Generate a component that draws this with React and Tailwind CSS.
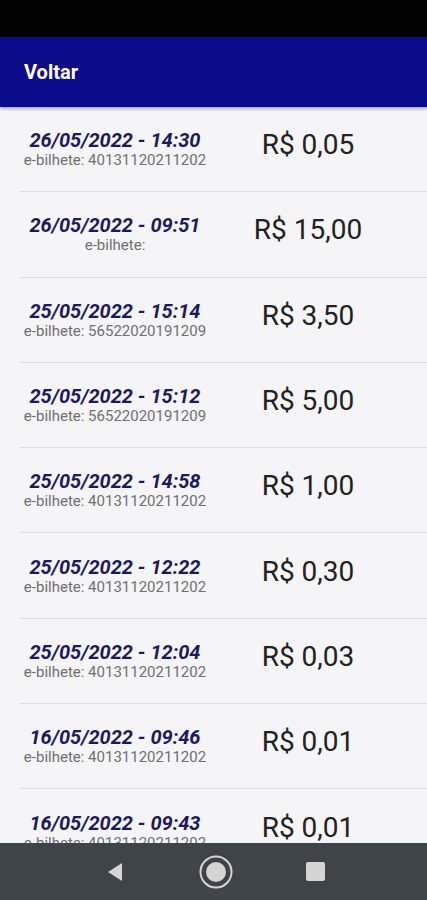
const rows = [
    { date: "26/05/2022 - 14:30", ticket: "40131120211202", amount: "R$ 0,05" },
    { date: "26/05/2022 - 09:51", ticket: "", amount: "R$ 15,00" },
    { date: "25/05/2022 - 15:14", ticket: "56522020191209", amount: "R$ 3,50" },
    { date: "25/05/2022 - 15:12", ticket: "56522020191209", amount: "R$ 5,00" },
    { date: "25/05/2022 - 14:58", ticket: "40131120211202", amount: "R$ 1,00" },
    { date: "25/05/2022 - 12:22", ticket: "40131120211202", amount: "R$ 0,30" },
    { date: "25/05/2022 - 12:04", ticket: "40131120211202", amount: "R$ 0,03" },
    { date: "16/05/2022 - 09:46", ticket: "40131120211202", amount: "R$ 0,01" },
    { date: "16/05/2022 - 09:43", ticket: "40131120211202", amount: "R$ 0,01" },
];

function Row({ row }) {
    return (
        <div className="ml-[20px] h-[85.3px] shrink-0 border-b border-[#dedee3] flex items-center">
            <div className="w-[230px] -ml-[20px] shrink-0 flex flex-col items-center">
                <span className="text-[20px] leading-[22px] font-bold italic text-[#1c1a5e]">{row.date}</span>
                <span className="text-[15px] leading-[18px] text-[#707070]">
                    e-bilhete: {row.ticket}
                </span>
            </div>
            <div className="w-[156px] shrink-0 -mt-[8px] text-center text-[28px] text-[#222222]">{row.amount}</div>
        </div>
    );
}

export default function App() {
    return (
        <div className="w-[427px] h-[900px] flex flex-col overflow-hidden bg-[#f5f5f8]" style={{ fontFamily: "Roboto, 'Liberation Sans', sans-serif" }}>
            <div className="h-[37px] shrink-0 bg-black"></div>
            <div className="h-[70px] shrink-0 bg-[#0c0b8c] flex items-center px-[24px] shadow-[0_2px_3px_rgba(0,0,0,0.3)] z-10">
                <span className="text-white font-bold text-[20px]">Voltar</span>
            </div>
            <div className="flex-1 flex flex-col overflow-hidden">
                {rows.map((row, i) => (
                    <Row key={i} row={row} />
                ))}
            </div>
            <div className="h-[57px] shrink-0 bg-[#3e4448] flex items-center justify-center">
                <svg width="22" height="22" viewBox="0 0 22 22" className="mr-[72px] ml-[2px]">
                    <polygon points="18,2 18,20 4,11" fill="#d4d4d4" />
                </svg>
                <svg width="36" height="36" viewBox="0 0 36 36" className="mr-[72px]">
                    <circle cx="18" cy="18" r="15.5" fill="none" stroke="#d4d4d4" strokeWidth="2" />
                    <circle cx="18" cy="18" r="10" fill="#d4d4d4" />
                </svg>
                <div className="w-[19px] h-[19px] rounded-[2px] bg-[#d4d4d4]"></div>
            </div>
        </div>
    );
}
